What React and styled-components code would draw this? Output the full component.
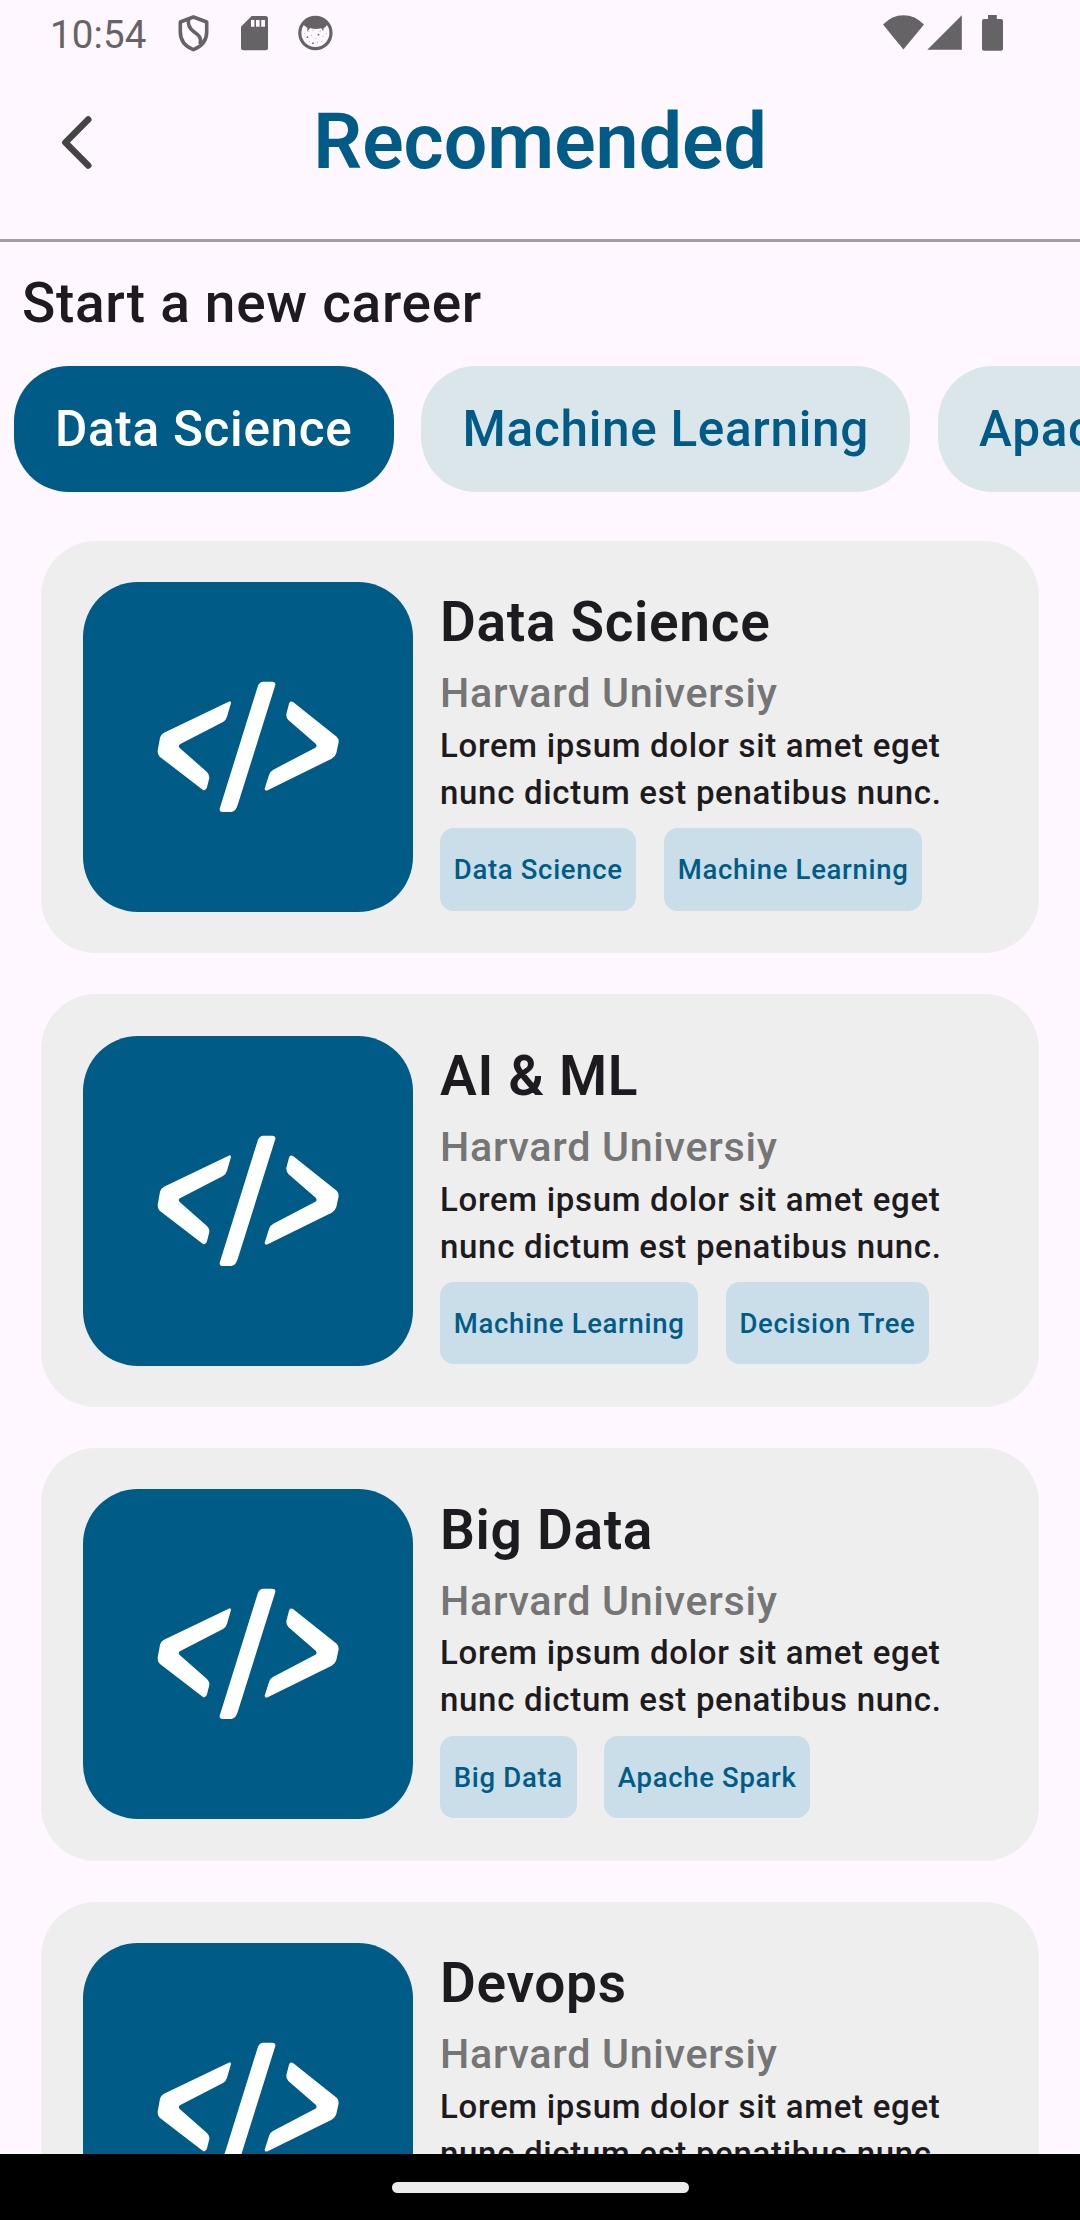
import React from "react";
import styled, { createGlobalStyle } from "styled-components";

const color = {
  background: "#fef7ff",
  primary: "#005c87",
  chip: "#dbe6eb",
  tag: "#c9dee9",
  card: "#eeeeee",
  text: "#1d1b20",
  muted: "#757575",
  status: "#666366",
};

const GlobalStyle = createGlobalStyle`
  *, *::before, *::after { box-sizing: border-box; }
  html, body { margin: 0; padding: 0; background: ${color.background}; }
  h1, h2, h3, p, ul { margin: 0; padding: 0; }
`;

const Screen = styled.div`
  display: flex;
  flex-direction: column;
  width: 1080px;
  height: 2220px;
  overflow: hidden;
  background: ${color.background};
  color: ${color.text};
  font-family: Roboto, "Liberation Sans", sans-serif;
  font-weight: 500;
  letter-spacing: 0.6875px;
`;

const StatusBar = styled.div`
  display: flex;
  flex: none;
  align-items: center;
  justify-content: space-between;
  height: 66px;
  padding: 0 77px 0 50px;
`;

const StatusGroup = styled.div`
  display: flex;
  align-items: center;
`;

const Clock = styled.span`
  width: 96px;
  padding-top: 4px;
  font-size: 38.5px;
  font-weight: 400;
  line-height: 46px;
  letter-spacing: 0.1px;
  color: ${color.status};
`;

const StatusIcon = styled.svg`
  display: block;
  flex: none;
  width: ${(p) => p.$w}px;
  height: 40px;
  margin-left: ${(p) => p.$gap || 0}px;
  fill: ${color.status};
`;

const Header = styled.header`
  display: grid;
  flex: none;
  grid-template-columns: 1fr auto 1fr;
  align-items: center;
  height: 176px;
  padding-bottom: 22px;
  border-bottom: 3px solid #9f9d9f;
`;

const BackButton = styled.button`
  width: 55px;
  height: 55px;
  margin: 2px 0 0 50px;
  padding: 0;
  border: 0;
  background: none;
`;

const BackIcon = styled.svg`
  display: block;
  width: 55px;
  height: 55px;
  fill: none;
  stroke: #444444;
  stroke-width: 6.6;
  stroke-linecap: round;
  stroke-linejoin: round;
`;

const PageTitle = styled.h1`
  font-size: 77px;
  font-weight: 600;
  line-height: 90px;
  letter-spacing: 0;
  color: ${color.primary};
`;

const SectionTitle = styled.h2`
  flex: none;
  padding: 22px 22px 0;
  font-size: 55px;
  font-weight: 500;
  line-height: 78.65px;
`;

const ChipRow = styled.div`
  display: flex;
  flex: none;
  gap: 27.5px;
  padding: 23.4px 0 0 13.75px;
  overflow: hidden;
`;

const Chip = styled.div`
  flex: none;
  height: 126px;
  padding: 0 41.25px;
  border-radius: 55px;
  background: ${(p) => (p.$active ? color.primary : color.chip)};
  color: ${(p) => (p.$active ? "#ffffff" : color.primary)};
  font-size: 49.5px;
  line-height: 126px;
  white-space: nowrap;
`;

const CardList = styled.main`
  display: flex;
  flex: 1;
  flex-direction: column;
  gap: 41.25px;
  min-height: 0;
  padding: 48.6px 41.25px 0;
  overflow: hidden;
`;

const Card = styled.article`
  display: flex;
  flex: none;
  gap: 27.5px;
  height: 412.5px;
  padding: 41.25px;
  border-radius: 55px;
  background: ${color.card};
`;

const Thumbnail = styled.div`
  flex: none;
  width: 330px;
  height: 330px;
  overflow: hidden;
  border-radius: 55px;
  background: ${color.primary};
`;

const ThumbnailIcon = styled.svg`
  display: block;
  width: 330px;
  height: 330px;
  fill: #ffffff;
`;

const CardBody = styled.div`
  display: flex;
  flex: 1;
  flex-direction: column;
  min-width: 0;
  padding-top: 1.2px;
`;

const CardTitle = styled.h3`
  font-size: 55px;
  font-weight: 600;
  line-height: 78.65px;
`;

const School = styled.p`
  margin-top: 2.5px;
  font-size: 41.25px;
  line-height: 59px;
  color: ${color.muted};
`;

const Summary = styled.p`
  width: 520px;
  margin-top: -1.4px;
  font-size: 33px;
  line-height: 47px;
`;

const TagRow = styled.div`
  display: flex;
  gap: 27.5px;
  margin-top: 12.2px;
`;

const Tag = styled.span`
  height: 82.5px;
  padding: 0 13.75px;
  border-radius: 13.75px;
  background: ${color.tag};
  color: ${color.primary};
  font-size: 27.5px;
  line-height: 84px;
  white-space: nowrap;
`;

const NavBar = styled.footer`
  display: flex;
  flex: none;
  align-items: center;
  justify-content: center;
  height: 66px;
  background: #000000;
`;

const NavHandle = styled.div`
  width: 297px;
  height: 11px;
  border-radius: 6px;
  background: #ececec;
`;

const chips = ["Data Science", "Machine Learning", "Apache Spark"];

const courses = [
  { title: "Data Science", tags: ["Data Science", "Machine Learning"] },
  { title: "AI & ML", tags: ["Machine Learning", "Decision Tree"] },
  { title: "Big Data", tags: ["Big Data", "Apache Spark"] },
  { title: "Devops", tags: [] },
];

const freckles = [
  [309, 32], [313, 30.5], [320, 31.5], [304.5, 34], [307.5, 37.5],
  [311.5, 35.5], [316, 38.5], [318.5, 35], [323, 36.5], [326.5, 34],
  [309.5, 42], [313, 43.5], [317.5, 42.5], [322, 41.5],
];

function Shield() {
  return (
    <StatusIcon $w={31} $gap={32} viewBox="178 13 31 40">
      <path
        d="M193.4 17 L206.7 22 V32 C206.7 40.5 201.5 46.5 193.4 49.7 C185.3 46.5 180.3 40.5 180.3 32 V22 Z M188.6 19.5 C187.6 25 189 28.2 193.6 31.4 C199 35 201.8 38 200.2 44.2"
        fill="none"
        stroke={color.status}
        strokeWidth="3.6"
        strokeLinejoin="round"
      />
    </StatusIcon>
  );
}

function MemoryCard() {
  return (
    <StatusIcon $w={27} $gap={32} viewBox="241 13 27 40">
      <path
        fillRule="evenodd"
        d="M251.6 16 H265.5 Q268 16 268 18.5 V47.8 Q268 50.3 265.5 50.3 H243.5 Q241 50.3 241 47.8 V26.7 Z M251 20 V26.7 H254.4 V20 Z M256 20 V26.7 H259.6 V20 Z M261.2 20 V26.7 H265 V20 Z"
      />
    </StatusIcon>
  );
}

function Face() {
  return (
    <StatusIcon $w={35} $gap={30} viewBox="298 13.3 35 40">
      <circle cx="315.4" cy="33.3" r="15.6" fill="none" stroke={color.status} strokeWidth="3.2" />
      <path d="M303 24 A15.5 15.5 0 0 1 327.8 24 Q326 27.5 323.7 28.3 L323.2 31.5 L321.4 28.6 Q315.4 30 310 28.4 L307.2 32 L307.4 28 Q304.5 27 303 24 Z" />
      {freckles.map(([x, y], i) => (
        <circle key={i} cx={x} cy={y} r={i % 7 === 4 || i === 7 ? 0.9 : 0.45} />
      ))}
    </StatusIcon>
  );
}

function CodeIcon() {
  return (
    <ThumbnailIcon viewBox="127 156 990 990">
      <path d="M564 515 Q571 512 571 519 L559 560 Q556 571 547 576 L419 642 Q411 647 417 654 L498 725 Q507 733 506 744 L499 772 Q495 785 486 779 L357 680 Q350 673 351 662 L358 623 Q361 613 370 608 Z" />
      <path d="M668 455 H696 Q706 456 704 465 L592 822 Q586 845 572 846 H545 Q536 845 537 836 L651 470 Q656 455 668 455 Z" />
      <path d="M758 517 Q748 510 745 521 L737 552 Q736 563 743 570 L825 641 Q831 648 824 653 L698 719 Q688 724 685 735 L672 776 Q672 784 681 781 L873 686 Q884 680 887 669 L894 637 Q895 626 888 620 Z" />
    </ThumbnailIcon>
  );
}

export default function App() {
  return (
    <Screen>
      <GlobalStyle />
      <StatusBar>
        <StatusGroup>
          <Clock>10:54</Clock>
          <Shield />
          <MemoryCard />
          <Face />
        </StatusGroup>
        <StatusGroup>
          <StatusIcon $w={41} viewBox="883 13 41 40">
            <path d="M903.4 49.5 L883 24.5 Q892 15.2 903.5 15.2 Q915 15.2 924 24.5 Z" />
          </StatusIcon>
          <StatusIcon $w={35} $gap={3} viewBox="927 13 35 40">
            <path d="M927.3 49.8 L961.8 15.3 V49.8 Z" />
          </StatusIcon>
          <StatusIcon $w={21} $gap={20} viewBox="982 13 21 40">
            <path d="M988 15 H996.8 V19 H1001 Q1003 19 1003 21 V48.7 Q1003 50.7 1001 50.7 H984 Q982 50.7 982 48.7 V21 Q982 19 984 19 H988 Z" />
          </StatusIcon>
        </StatusGroup>
      </StatusBar>

      <Header>
        <BackButton aria-label="Back">
          <BackIcon viewBox="0 0 55 55">
            <path d="M38.2 4.5 L15.4 27.5 L38.2 50.5" />
          </BackIcon>
        </BackButton>
        <PageTitle>Recomended</PageTitle>
      </Header>

      <SectionTitle>Start a new career</SectionTitle>

      <ChipRow>
        {chips.map((name, i) => (
          <Chip key={name} $active={i === 0}>
            {name}
          </Chip>
        ))}
      </ChipRow>

      <CardList>
        {courses.map((course) => (
          <Card key={course.title}>
            <Thumbnail>
              <CodeIcon />
            </Thumbnail>
            <CardBody>
              <CardTitle>{course.title}</CardTitle>
              <School>Harvard Universiy</School>
              <Summary>Lorem ipsum dolor sit amet eget nunc dictum est penatibus nunc.</Summary>
              <TagRow>
                {course.tags.map((tag) => (
                  <Tag key={tag}>{tag}</Tag>
                ))}
              </TagRow>
            </CardBody>
          </Card>
        ))}
      </CardList>

      <NavBar>
        <NavHandle />
      </NavBar>
    </Screen>
  );
}
